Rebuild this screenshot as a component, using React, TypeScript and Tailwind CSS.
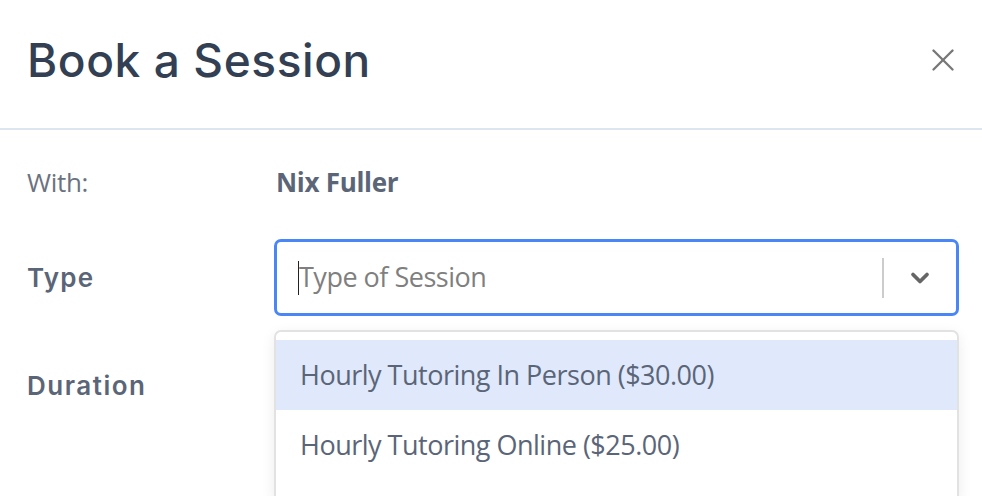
import { X, ChevronDown } from 'lucide-react';

const options = ['Hourly Tutoring In Person ($30.00)', 'Hourly Tutoring Online ($25.00)'];

export default function App() {
  return (
    <div className="w-[982px] h-[496px] overflow-hidden bg-white font-['Open_Sans',sans-serif]">
      {/* Header */}
      <div className="h-[130px] flex items-center justify-between pl-[27px] pr-[20px] border-b-2 border-[#dde5ef]">
        <h1 className="font-['Inter',sans-serif] text-[46px] font-medium tracking-[0.6px] text-[#333f52] mt-[-8px]">
          Book a Session
        </h1>
        <button className="text-[#777] mt-[-8px]">
          <X className="w-[38px] h-[38px]" strokeWidth={1.5} />
        </button>
      </div>

      {/* Body */}
      <div className="pl-[27px] pr-[23px] pt-[36px]">
        <div className="flex items-center h-[32px]">
          <div className="w-[249px] text-[26px] tracking-[-0.3px] text-[#6b7280]">With:</div>
          <div className="text-[26px] font-bold tracking-[-0.3px] text-[#5b6578]">Nix Fuller</div>
        </div>

        <div className="flex items-center mt-[41px]">
          <div className="w-[247px] font-['Inter',sans-serif] text-[26px] font-semibold tracking-[1.2px] text-[#5b6578]">Type</div>
          <div className="relative flex-1">
            <div className="h-[77px] border-[3px] border-[#4a86f6] rounded-[7px] flex items-center">
              <div className="flex-1 flex items-center pl-[21px]">
                <span className="w-px h-[34px] bg-[#222]"></span>
                <span className="text-[27px] tracking-[-0.5px] text-[#7f7f7f]">Type of Session</span>
              </div>
              <span className="w-[2px] h-[40px] bg-[#cccccc]"></span>
              <div className="w-[72px] flex items-center justify-center text-[#666]">
                <ChevronDown className="w-[28px] h-[28px]" strokeWidth={3.2} />
              </div>
            </div>

            {/* Dropdown */}
            <div className="absolute left-0 right-0 top-[91px] bg-white border-2 border-[#e2e2e2] rounded-[7px] shadow-[0_4px_14px_rgba(0,0,0,0.08)] pt-[8px] pb-[20px] z-10">
              {options.map((o, i) => (
                <div
                  key={o}
                  className={
                    i === 0
                      ? 'h-[70px] flex items-center pl-[24px] bg-[#e0e9fb] text-[27px] tracking-[-0.5px] text-[#5b6578]'
                      : 'h-[70px] flex items-center pl-[24px] text-[27px] tracking-[-0.5px] text-[#5b6578]'
                  }
                >
                  {o}
                </div>
              ))}
            </div>
          </div>
        </div>

        <div className="flex items-center mt-[50px]">
          <div className="w-[247px] font-['Inter',sans-serif] text-[26px] font-semibold tracking-[1.5px] text-[#5b6578]">Duration</div>
        </div>
      </div>
    </div>
  );
}
